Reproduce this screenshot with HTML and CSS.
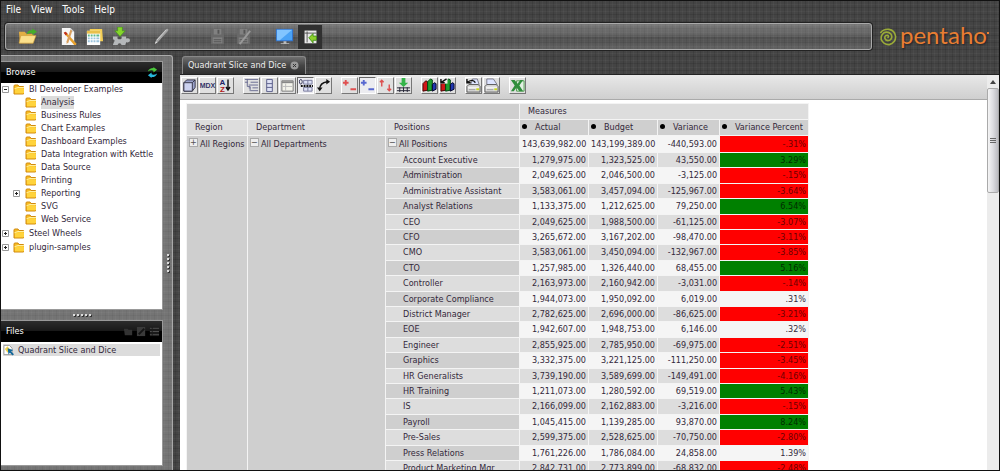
FILE: index.html
```
<!DOCTYPE html>
<html lang="en">
<head>
    <meta charset="UTF-8">
    <meta name="viewport" content="width=device-width, initial-scale=1.0">
    <title>Pentaho User Console</title>
    <link rel="stylesheet" href="styles.css">
</head>
<body>
    <!-- Shared symbols -->
    <svg class="symbols" aria-hidden="true">
        <symbol id="folder" viewBox="0 0 12 11">
            <path d="M1 10V2q0-1 1-1h3l1 1.500h4.500v7.500z" fill="#f9bd22" stroke="#d08a10"/>
            <path d="M2 5l2-.7h7v5H2z" fill="#ffd33c"/>
            <path d="M1.500 4.700L5 3.500h6" fill="none" stroke="#fff0a0"/>
        </symbol>
        <symbol id="floppy" viewBox="0 0 20 20">
            <path d="M3 2h14v16H3z" fill="#686868"/>
            <path d="M6 2h8v6H6zM5 11h10v6H5z" fill="#818181"/>
            <path d="M10 3h2v4h-2zM6 13h8v1H6zM6 15h8v1H6z" fill="#555"/>
        </symbol>
        <symbol id="plus" viewBox="0 0 7 7">
            <path d="M.5.5h6v6h-6z" fill="#fff" stroke="#999"/>
            <path d="M2 3h3v1H2zM3 2h1v3H3z" fill="#222"/>
        </symbol>
        <symbol id="minus" viewBox="0 0 7 7">
            <path d="M.5.5h6v6h-6z" fill="#fff" stroke="#999"/>
            <path d="M2 3h3v1H2z" fill="#222"/>
        </symbol>
        <symbol id="bars" viewBox="0 0 16 16">
            <path d="M1 6l3-3 2 1v9l-5 1z" fill="#d01818" stroke="#400"/>
            <path d="M6 4l3-3 2 1v11l-5 1z" fill="#20a030" stroke="#041"/>
            <path d="M11 7l2-2 2 1v6l-4 2z" fill="#2038b0" stroke="#002"/>
        </symbol>
        <symbol id="printer" viewBox="0 0 16 16">
            <path d="M1 9l2-2h10l2 2v6H1z" fill="#ddd" stroke="#555"/>
            <path d="M2 10h12v1H2z" fill="#fff"/>
            <path d="M3 12h7v1H3z" fill="#999"/>
            <path d="M11 11h3v2h-3z" fill="#c8d820"/>
        </symbol>
    </svg>

    <header>
        <nav>
            <a href="#">File</a>
            <a href="#">View</a>
            <a href="#">Tools</a>
            <a href="#">Help</a>
        </nav>
        <div class="banner">
            <div class="main-toolbar">
                <div class="group">
                    <button aria-label="Open"><svg viewBox="0 0 20 20"><path d="M1 5h6l2 2h7v10H2z" fill="#e2ae43"/><path d="M1 17l2-8h16l-3 8z" fill="#fbe08c" stroke="#c99732" stroke-width=".6"/><path d="M9 8q1-5 6-4.500V1.500l5 3.500-5 3.500V6.500q-4-.5-6 1.500z" fill="#45ad2b"/></svg></button>
                </div>
                <div class="group">
                    <button aria-label="New report"><svg viewBox="0 0 20 20"><path d="M3 1h9l4 4v14H3z" fill="#f6f6f6"/><path d="M12 1v4h4" fill="#ccc"/><path d="M5 6l2-1 11 12v2h-2z" fill="#e6a02c"/><path d="M5 6l2-1 2 2-2 2z" fill="#c03020"/><path d="M12 3l2 1-4 12-2 2v-3z" fill="#d9a05e"/></svg></button>
                    <button aria-label="New analysis"><svg viewBox="0 0 20 20"><path d="M5 2h13l1 13H5z" fill="#f4cf55"/><path d="M2 4h14v15H2z" fill="#fff"/><path d="M2 4h14v3H2z" fill="#e8c04c"/><path d="M3 8h2v2H3zM6 8h2v2H6zM9 8h2v2H9zM12 8h3v2h-3z" fill="#5fb88c"/><path d="M3 11h2v2H3zM6 11h2v2H6zM9 11h2v2H9zM12 11h3v2h-3zM3 14h2v2H3zM6 14h2v2H6zM9 14h2v2H9zM12 14h3v2h-3z" fill="#9bc4dd"/></svg></button>
                    <button aria-label="Manage data sources"><svg viewBox="0 0 20 20"><path d="M2 10h5q-1 3 2 3t2-3h5v2q4-1 4 2t-4 2l-1 3h-4q0-2-2-2t-2 2H2l1-3q2-2-1-3z" fill="#b5b8ba"/><path d="M7 0h5v4h3l-5.500 6L4 4h3z" fill="#86d52c" stroke="#3f9417" stroke-width=".7"/></svg></button>
                </div>
                <div class="group">
                    <button aria-label="Edit"><svg viewBox="0 0 20 20"><path d="M3 18l2-5L15 2q3-1 2 2L7 15z" fill="#a3a3a3"/><path d="M5 14L15 3" stroke="#d0d0d0"/><path d="M3 18l1-3 2 1z" fill="#ddd"/></svg></button>
                </div>
                <div class="group wide">
                    <button aria-label="Save"><svg><use href="#floppy"/></svg></button>
                    <button aria-label="Save as"><svg viewBox="0 0 20 20"><use href="#floppy"/><path d="M6 18L17 4" stroke="#999" stroke-width="2"/></svg></button>
                </div>
                <div class="group">
                    <button aria-label="Workspace"><svg viewBox="0 0 20 20"><path d="M1 2h18v13H1z" fill="#2f6fc9"/><path d="M2 3h16v11H2z" fill="#4aa2f5"/><path d="M2 3h16L5 14H2z" fill="#82c5ff"/><path d="M9 15h3v2h3v1H6v-1h3z" fill="#bbb"/></svg></button>
                    <button class="active" aria-label="Show browser"><svg viewBox="0 0 20 20"><path d="M3 3h14v15H3z" fill="#e9e9e9"/><path d="M6 4v13M3 6h14" stroke="#444"/><path d="M8 11.500l5-5v3h4v5h-4v3z" fill="#8cd02c" stroke="#3c8a14"/></svg></button>
                </div>
            </div>
            <div class="logo">
                <svg viewBox="0 0 20 20"><path d="M10 10.500q1.500-1.500-.5-2.500-3.500 0-3 3.500 1.500 3.500 5.500 2 3.500-2.500 1.500-6.500Q10.500 3.500 6 5q-4.500 3-3.500 8 3 6 9 5.500 7-2 7-9Q17.500 2.500 11 1.500 5 1 2 5" fill="none" stroke="#9aab38" stroke-width="1.800" stroke-linecap="round"/></svg>
                <span>pentaho</span><i></i>
            </div>
        </div>
    </header>

    <main>
        <aside>
            <section class="browse">
                <div class="panel-title">
                    <h2>Browse</h2>
                    <button aria-label="Refresh"><svg viewBox="0 0 12 12"><path d="M1 5q1-4 6-4V0l4 3-4 3V4Q4 3 1 5z" fill="#4cc83c"/><path d="M11 7q-1 4-6 4v1L1 9l4-3v2q3 1 6-1z" fill="#28b8dc"/></svg></button>
                </div>
                <ul class="tree">
                    <li><button aria-label="Collapse"><svg><use href="#minus"/></svg></button><svg class="folder"><use href="#folder"/></svg><a href="#">BI Developer Examples</a>
                        <ul>
                            <li><svg class="folder"><use href="#folder"/></svg><a href="#" class="selected">Analysis</a></li>
                            <li><svg class="folder"><use href="#folder"/></svg><a href="#">Business Rules</a></li>
                            <li><svg class="folder"><use href="#folder"/></svg><a href="#">Chart Examples</a></li>
                            <li><svg class="folder"><use href="#folder"/></svg><a href="#">Dashboard Examples</a></li>
                            <li><svg class="folder"><use href="#folder"/></svg><a href="#">Data Integration with Kettle</a></li>
                            <li><svg class="folder"><use href="#folder"/></svg><a href="#">Data Source</a></li>
                            <li><svg class="folder"><use href="#folder"/></svg><a href="#">Printing</a></li>
                            <li class="closed"><button aria-label="Expand"><svg><use href="#plus"/></svg></button><svg class="folder"><use href="#folder"/></svg><a href="#">Reporting</a></li>
                            <li><svg class="folder"><use href="#folder"/></svg><a href="#">SVG</a></li>
                            <li><svg class="folder"><use href="#folder"/></svg><a href="#">Web Service</a></li>
                        </ul>
                    </li>
                    <li><button aria-label="Expand"><svg><use href="#plus"/></svg></button><svg class="folder"><use href="#folder"/></svg><a href="#">Steel Wheels</a></li>
                    <li><button aria-label="Expand"><svg><use href="#plus"/></svg></button><svg class="folder"><use href="#folder"/></svg><a href="#">plugin-samples</a></li>
                </ul>
            </section>
            <div class="splitter"><i></i><i></i><i></i><i></i><i></i></div>
            <section class="files">
                <div class="panel-title">
                    <h2>Files</h2>
                    <button aria-label="Open file"><svg viewBox="0 0 12 12"><path d="M1 3h4l1 1h4v6H2z" fill="#333"/></svg></button>
                    <button aria-label="Edit file"><svg viewBox="0 0 12 12"><path d="M1 1h9v10H1z" fill="#3a3a3a"/><path d="M3 9l6-6" stroke="#151515" stroke-width="2"/></svg></button>
                    <button aria-label="File actions"><svg viewBox="0 0 12 12"><path d="M1 1h10v10H1z" fill="#1b1b1b"/><path d="M1 2.500h2M4 2.500h7M1 6h2M4 6h7M1 9.500h2M4 9.500h7" stroke="#555"/></svg></button>
                </div>
                <ul class="file-list">
                    <li><svg viewBox="0 0 12 12"><path d="M1 1h6l3 3v7H1z" fill="#fff" stroke="#999"/><path d="M2 5l3-3 2 3-2 4z" fill="#f3d34a"/><path d="M5 4l6 2-2 1.500 3 3-1.500 1.500-3-3L6 11z" fill="#14699b"/></svg><a href="#">Quadrant Slice and Dice</a></li>
                </ul>
            </section>
        </aside>
        <div class="side-splitter"><i></i><i></i><i></i><i></i><i></i></div>

        <section class="content">
            <div class="tabs">
                <div class="tab"><a href="#">Quadrant Slice and Dice</a><button aria-label="Close tab"><svg viewBox="0 0 9 9"><circle cx="4.500" cy="4.500" r="4" fill="#999"/><path d="M3 3l3 3M6 3L3 6" stroke="#333"/></svg></button></div>
            </div>
            <div class="viewer">
                <div class="page">
                    <div class="olap-toolbar">
                        <div class="tools">
                            <button aria-label="Cube navigator"><svg viewBox="0 0 16 16"><path d="M2 5l3-3h9v8l-3 4H2z" fill="#9ca4cc" stroke="#334"/><path d="M2 5h9v9H2z" fill="#ccd2f0" stroke="#334"/><path d="M11 5l3-3" stroke="#334"/></svg></button>
                            <button class="mdx">MDX</button>
                            <button class="sort" aria-label="Sort options"><span>A<b>Z</b></span><svg viewBox="0 0 6 14"><path d="M3 1v10M1 8.500l2 3 2-3" fill="none" stroke="#111" stroke-width="1.400"/></svg></button>
                        </div>
                        <div class="tools">
                            <button aria-label="Show parent members"><svg viewBox="0 0 16 16"><path d="M1 1.500h14M1 4.500h3M7 4.500h8M5 7.500h10M5 10.500h2M9 10.500h6M7 13.500h8M3.500 1v8h3v5" fill="none" stroke="#666a90"/></svg></button>
                            <button aria-label="Hide spans"><svg viewBox="0 0 16 16"><path d="M5 1.500h6v13H5zM5 6h6M5 10h6" fill="#dfe2f5" stroke="#555a86"/></svg></button>
                            <button aria-label="Show properties"><svg viewBox="0 0 16 16"><path d="M2 3h12v11H2z" fill="#f4f4ec" stroke="#777"/><path d="M2 4.500h12" stroke="#888" stroke-width="2"/><path d="M6 6v8M3 9h10" stroke="#bbb"/></svg></button>
                            <button class="pressed" aria-label="Suppress empty rows"><svg viewBox="0 0 16 16"><path d="M6 2.500h9v4H6zM6 10h9v4H6zM10.500 2v12" fill="#dce0f5" stroke="#777a9c"/><ellipse cx="3" cy="4" rx="1.500" ry="2.500" fill="none" stroke="#335"/><path d="M3 8.500h13" stroke="#111" stroke-width="2" stroke-dasharray="2 1"/></svg></button>
                            <button aria-label="Swap axes"><svg viewBox="0 0 16 16"><path d="M4 12q0-7 8-8" fill="none" stroke="#111" stroke-width="1.500"/><path d="M11 1l4 3-4 3zM1 10h6l-3 4z" fill="#111"/></svg></button>
                        </div>
                        <div class="tools">
                            <button aria-label="Drill member"><svg viewBox="0 0 16 16"><path d="M1 5h6M4 2v6M9 12h6" stroke="#e05050" stroke-width="2"/></svg></button>
                            <button class="pressed" aria-label="Drill position"><svg viewBox="0 0 16 16"><path d="M1 5h6M4 2v6M9 12h6" stroke="#5868d0" stroke-width="2"/></svg></button>
                            <button aria-label="Drill replace"><svg viewBox="0 0 16 16"><path d="M4 9V2M2 4.500l2-2 2 2M12 7v7M10 11.500l2 2 2-2" fill="none" stroke="#dd5050" stroke-width="1.500"/></svg></button>
                            <button aria-label="Drill through"><svg viewBox="0 0 16 16"><path d="M6 0h4v5h3L8 9.500 3 5h3z" fill="#35b54a"/><path d="M1 10.500h14M1 13.500h14M4 10v5M8 10v5M12 10v5" stroke="#223"/></svg></button>
                        </div>
                        <div class="tools">
                            <button aria-label="Show chart"><svg><use href="#bars"/></svg></button>
                            <button aria-label="Chart options"><svg viewBox="0 0 16 16"><use href="#bars"/><path d="M0 0h8v6H0z" fill="#eee"/><path d="M1 1v4h4M1 5l6-4" fill="none" stroke="#111" stroke-width="1.500"/></svg></button>
                        </div>
                        <div class="tools">
                            <button aria-label="Print options"><svg viewBox="0 0 16 16"><path d="M5 7l2-6h5l2 6z" fill="#dde4ff" stroke="#778"/><use href="#printer"/><path d="M1 1v4h4M1 5q6-5 9 0" fill="none" stroke="#111" stroke-width="1.500"/></svg></button>
                            <button aria-label="Print"><svg viewBox="0 0 16 16"><path d="M3 7V1h7l4 6z" fill="#dde4ff" stroke="#778"/><use href="#printer"/></svg></button>
                        </div>
                        <div class="tools">
                            <button aria-label="Export to Excel"><svg viewBox="0 0 16 16"><path d="M7 3h8v11H7z" fill="#e2f0e2" stroke="#4a9a4a"/><path d="M1 2h4l3 4 3-4h3l-4 6 4 6h-4l-3-4-3 4H1l4-6z" fill="#2f8e3c"/></svg></button>
                        </div>
                    </div>

                    <table>
                        <colgroup>
                            <col class="c-region"><col class="c-dept"><col class="c-pos"><col class="c-num"><col class="c-num"><col class="c-var"><col class="c-pct">
                        </colgroup>
                        <thead>
                            <tr>
                                <th class="corner" colspan="3"></th>
                                <th colspan="4">Measures</th>
                            </tr>
                            <tr>
                                <th>Region</th>
                                <th>Department</th>
                                <th>Positions</th>
                                <th class="measure">Actual</th>
                                <th class="measure">Budget</th>
                                <th class="measure">Variance</th>
                                <th class="measure">Variance Percent</th>
                            </tr>
                        </thead>
                        <tbody>
                            <tr class="total"><th class="span" rowspan="22"><button aria-label="Expand">+</button>All Regions</th><th class="span" rowspan="22"><button aria-label="Collapse">−</button>All Departments</th><th><button aria-label="Collapse">−</button>All Positions</th><td>143,639,982.00</td><td>143,199,389.00</td><td>-440,593.00</td><td class="red">-.31%</td></tr>
                            <tr><th>Account Executive</th><td>1,279,975.00</td><td>1,323,525.00</td><td>43,550.00</td><td class="green">3.29%</td></tr>
                            <tr><th>Administration</th><td>2,049,625.00</td><td>2,046,500.00</td><td>-3,125.00</td><td class="red">-.15%</td></tr>
                            <tr><th>Administrative Assistant</th><td>3,583,061.00</td><td>3,457,094.00</td><td>-125,967.00</td><td class="red">-3.64%</td></tr>
                            <tr><th>Analyst Relations</th><td>1,133,375.00</td><td>1,212,625.00</td><td>79,250.00</td><td class="green">6.54%</td></tr>
                            <tr><th>CEO</th><td>2,049,625.00</td><td>1,988,500.00</td><td>-61,125.00</td><td class="red">-3.07%</td></tr>
                            <tr><th>CFO</th><td>3,265,672.00</td><td>3,167,202.00</td><td>-98,470.00</td><td class="red">-3.11%</td></tr>
                            <tr><th>CMO</th><td>3,583,061.00</td><td>3,450,094.00</td><td>-132,967.00</td><td class="red">-3.85%</td></tr>
                            <tr><th>CTO</th><td>1,257,985.00</td><td>1,326,440.00</td><td>68,455.00</td><td class="green">5.16%</td></tr>
                            <tr><th>Controller</th><td>2,163,973.00</td><td>2,160,942.00</td><td>-3,031.00</td><td class="red">-.14%</td></tr>
                            <tr><th>Corporate Compliance</th><td>1,944,073.00</td><td>1,950,092.00</td><td>6,019.00</td><td>.31%</td></tr>
                            <tr><th>District Manager</th><td>2,782,625.00</td><td>2,696,000.00</td><td>-86,625.00</td><td class="red">-3.21%</td></tr>
                            <tr><th>EOE</th><td>1,942,607.00</td><td>1,948,753.00</td><td>6,146.00</td><td>.32%</td></tr>
                            <tr><th>Engineer</th><td>2,855,925.00</td><td>2,785,950.00</td><td>-69,975.00</td><td class="red">-2.51%</td></tr>
                            <tr><th>Graphics</th><td>3,332,375.00</td><td>3,221,125.00</td><td>-111,250.00</td><td class="red">-3.45%</td></tr>
                            <tr><th>HR Generalists</th><td>3,739,190.00</td><td>3,589,699.00</td><td>-149,491.00</td><td class="red">-4.16%</td></tr>
                            <tr><th>HR Training</th><td>1,211,073.00</td><td>1,280,592.00</td><td>69,519.00</td><td class="green">5.43%</td></tr>
                            <tr><th>IS</th><td>2,166,099.00</td><td>2,162,883.00</td><td>-3,216.00</td><td class="red">-.15%</td></tr>
                            <tr><th>Payroll</th><td>1,045,415.00</td><td>1,139,285.00</td><td>93,870.00</td><td class="green">8.24%</td></tr>
                            <tr><th>Pre-Sales</th><td>2,599,375.00</td><td>2,528,625.00</td><td>-70,750.00</td><td class="red">-2.80%</td></tr>
                            <tr><th>Press Relations</th><td>1,761,226.00</td><td>1,786,084.00</td><td>24,858.00</td><td>1.39%</td></tr>
                            <tr><th>Product Marketing Mgr</th><td>2,842,731.00</td><td>2,773,899.00</td><td>-68,832.00</td><td class="red">-2.48%</td></tr>
                        </tbody>
                    </table>
                </div>
                <div class="scrollbar">
                    <button aria-label="Scroll up"><svg viewBox="0 0 6 4"><path d="M0 4l3-4 3 4z" fill="#444"/></svg></button>
                    <div class="thumb"><i></i><i></i><i></i></div>
                </div>
            </div>
        </section>
    </main>
</body>
</html>
```
FILE: styles.css
```
* {
    box-sizing: border-box;
}
body {
    font-family: "DejaVu Sans Condensed", "DejaVu Sans", Tahoma, sans-serif;
    font-size: 9px;
    line-height: 13px;
    color: #33283a;
    margin: 0;
    height: 100vh;
    display: flex;
    flex-direction: column;
    overflow: hidden;
    border: 1px solid #111;
    background-color: #444;
    /* woven cloth texture */
    background-image:
        repeating-linear-gradient(90deg, rgba(0,0,0,.1) 0 1px, transparent 1px 3px, rgba(255,255,255,.03) 3px 4px, transparent 4px 7px),
        repeating-linear-gradient(rgba(0,0,0,.1) 0 1px, transparent 1px 4px, rgba(255,255,255,.03) 4px 5px, transparent 5px 7px);
}
a {
    color: inherit;
    text-decoration: none;
    white-space: nowrap;
}
button {
    font: inherit;
    color: inherit;
    padding: 0;
    border: none;
    background: none;
    display: flex;
    align-items: center;
    justify-content: center;
    cursor: pointer;
}
ul {
    list-style: none;
    margin: 0;
    padding: 0;
}
.symbols {
    display: none;
}

/* Header */
nav {
    display: flex;
    gap: 10px;
    padding: 2px 5px 0;
    height: 22px;
    font-size: 10px;
    color: #fff;
}
.banner {
    display: flex;
    align-items: center;
    height: 27px;
    padding-left: 4px;
    margin-bottom: 5px;
}
.main-toolbar {
    flex: 1;
    display: flex;
    align-items: center;
    gap: 17px;
    height: 27px;
    padding-left: 9px;
    border: 1px solid #aaa;
    border-radius: 3px;
    background: linear-gradient(rgba(255,255,255,.28), rgba(255,255,255,.15) 50%, rgba(255,255,255,.06) 52%, rgba(255,255,255,.16));
    box-shadow: 0 0 0 1px #222;
}
.group {
    display: flex;
    gap: 2px;
}
.group.wide {
    margin-left: 15px;
}
.group button {
    width: 24px;
    height: 24px;
}
.group svg {
    width: 19px;
    height: 19px;
}
.group .active {
    background: #303030;
}
.group .active svg {
    width: 17px;
    height: 17px;
}
.logo {
    display: flex;
    align-items: center;
    width: 127px;
    padding-left: 7px;
    color: #e87e33;
    font-family: "Lato", "Open Sans", sans-serif;
    font-size: 24px;
    line-height: 24px;
}
.logo svg {
    width: 18px;
    height: 18px;
    margin-right: 3px;
}
.logo span {
    padding-bottom: 4px;
    text-shadow: 1px 1px 2px #222;
}
.logo i {
    width: 2px;
    height: 2px;
    margin-bottom: 8px;
    background: #e87e33;
}

/* Left side */
main {
    flex: 1;
    display: flex;
    min-height: 0;
}
aside {
    width: 162px;
    display: flex;
    flex-direction: column;
    padding: 5px 0 4px;
    border-top: 1px solid #aaa;
    background: rgba(255,255,255,.26);
}
aside section {
    border: 1px solid #999;
    border-left: none;
    background: #fff;
    display: flex;
    flex-direction: column;
}
.browse {
    flex: 1;
    min-height: 0;
}
.files {
    height: 146px;
}
.panel-title {
    display: flex;
    align-items: center;
    gap: 2px;
    height: 21px;
    padding: 0 2px 0 5px;
    color: #fff;
    background: linear-gradient(#2c2c2c, #171717 50%, #000 50%);
}
.browse .panel-title {
    padding-right: 4px;
}
h2 {
    flex: 1;
    margin: 0;
    font-size: 9px;
    font-weight: normal;
}
.panel-title svg {
    width: 11px;
    height: 11px;
}
.splitter {
    display: flex;
    align-items: center;
    justify-content: center;
    gap: 2px;
    height: 10px;
}
.splitter i,
.side-splitter i {
    width: 2px;
    height: 2px;
    background: #ddd;
    box-shadow: 1px 1px 0 #333;
}
.tree > li {
    margin-bottom: 1px;
    padding-left: 1px;
}
.tree li {
    line-height: 13px;
    white-space: nowrap;
}
.tree ul {
    padding-left: 23px;
}
.tree .closed {
    margin-left: -12px;
}
.tree button {
    display: inline-flex;
    width: 7px;
    height: 13px;
    margin-right: 4px;
    vertical-align: top;
}
.tree .closed button {
    margin-right: 5px;
}
.tree button svg {
    width: 7px;
    height: 7px;
}
.tree .folder {
    width: 12px;
    height: 11px;
    margin: 1px 4px 0 0;
    vertical-align: top;
}
.tree a {
    display: inline-block;
    vertical-align: top;
}
.selected,
.file-list li {
    background: #dcdcdc;
}
.file-list {
    padding: 2px;
}
.file-list li {
    display: flex;
    gap: 4px;
    height: 12px;
}
.file-list svg {
    width: 11px;
    height: 12px;
}
.side-splitter {
    width: 10px;
    display: flex;
    flex-direction: column;
    align-items: center;
    justify-content: center;
    gap: 2px;
    border-top: 1px solid #aaa;
    border-right: 1px solid #aaa;
    border-radius: 0 3px 0 0;
    background: rgba(255,255,255,.26);
}

/* Report area */
.content {
    flex: 1;
    min-width: 0;
    display: flex;
    flex-direction: column;
    margin-left: 7px;
}
.tabs {
    height: 20px;
    padding: 1px 2px 0;
    display: flex;
    border-bottom: 1px solid #222;
}
.tab {
    display: flex;
    align-items: center;
    gap: 4px;
    padding: 0 6px 0 5px;
    border: 1px solid #888;
    border-bottom: none;
    border-radius: 3px 3px 0 0;
    color: #eee;
    background: linear-gradient(#707070, #454545 50%, #303030);
}
.tab svg {
    width: 9px;
    height: 9px;
}
.viewer {
    flex: 1;
    min-height: 0;
    display: flex;
    background: #fff;
}
.page {
    flex: 1;
    overflow: hidden;
}
.olap-toolbar {
    display: flex;
    gap: 9px;
    height: 25px;
    padding: 2px 1px;
    border-bottom: 1px solid #aaa;
    background: linear-gradient(#e8e8e8, #cfcfcf);
}
.tools {
    display: flex;
    gap: 1px;
}
.tools button {
    width: 17px;
    height: 17px;
    border: 1px solid;
    border-color: #fff #777 #777 #fff;
    background: #e0e0e0;
}
.tools .pressed {
    border-color: #666 #fff #fff #666;
    background: #ececf0;
}
.tools svg {
    width: 15px;
    height: 15px;
}
.tools .mdx {
    font: bold 7px "Liberation Sans", sans-serif;
    color: #336;
}
.tools .sort span {
    display: flex;
    flex-direction: column;
    font: bold 8px/7px "Liberation Sans", sans-serif;
    color: #226;
}
.tools .sort b {
    color: #b01818;
}
.tools .sort svg {
    width: 6px;
}

table {
    width: 623px;
    margin: 3px 0 0 6px;
    table-layout: fixed;
    border-collapse: collapse;
    border: 1px solid #999;
}
.c-region {
    width: 61px;
}
.c-dept {
    width: 138px;
}
.c-pos {
    width: 134px;
}
.c-num {
    width: 69px;
}
.c-var {
    width: 62px;
}
th, td {
    height: 15px;
    padding: 0 2px;
    line-height: 13px;
    border: 1px solid #f4f4f4;
    white-space: nowrap;
}
th {
    padding-left: 8px;
    text-align: left;
    font-weight: normal;
    background: #ddd;
}
thead th {
    height: 16px;
}
td {
    text-align: right;
    background: #ddd;
}
thead .corner,
thead .measure {
    background: #cfcfcf;
}
.measure {
    padding: 0 2px;
}
.measure::before {
    content: "";
    display: inline-block;
    width: 5px;
    height: 5px;
    margin: 0 8px 1px 0;
    border-radius: 50%;
    background: #000;
}
tbody th {
    padding-left: 17px;
}
tbody tr:nth-child(odd) th,
tbody .span {
    background: #cfcfcf;
}
tbody tr:nth-child(odd) td {
    background: #f5f5f5;
}
tbody tr:nth-child(5n) td,
tbody tr:nth-child(5n+3) td {
    height: 16px;
}
tbody .total td {
    height: 17px;
}
tbody .total th {
    padding: 2px 0 0 2px;
    vertical-align: top;
}
th button {
    display: inline-flex;
    width: 9px;
    height: 9px;
    margin-right: 2px;
    border: 1px solid #aaa;
    line-height: 7px;
    color: #555;
    background: #eee;
    vertical-align: top;
}
tbody tr .red,
tbody tr:nth-child(odd) .red {
    background: #f00;
    color: #6c0000;
}
tbody tr .green,
tbody tr:nth-child(odd) .green {
    background: #008000;
    color: #002c00;
}

.scrollbar {
    width: 12px;
    background: #ececec;
}
.scrollbar button {
    width: 12px;
    height: 13px;
}
.scrollbar button svg {
    width: 6px;
    height: 4px;
}
.thumb {
    display: flex;
    flex-direction: column;
    align-items: center;
    justify-content: center;
    gap: 1px;
    height: 105px;
    border: 1px solid #aaa;
    border-radius: 2px;
    background: linear-gradient(90deg, #f5f5f5, #dcdce0 50%, #bbbbc0);
}
.thumb i {
    width: 6px;
    height: 1px;
    background: #666;
}
```
